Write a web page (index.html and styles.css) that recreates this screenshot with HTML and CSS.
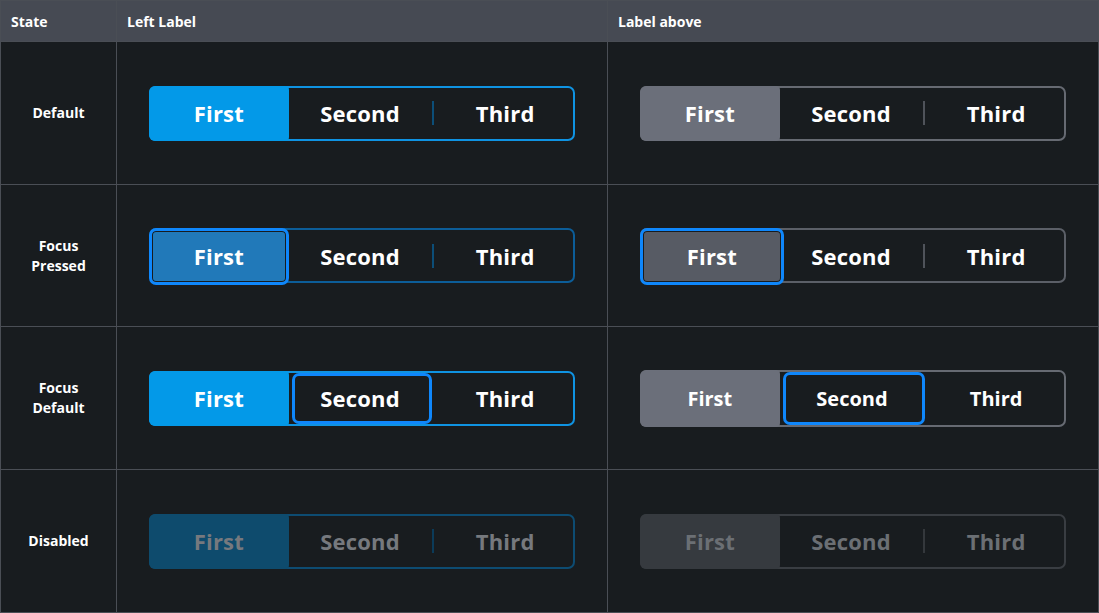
FILE: index.html
```html
<!DOCTYPE html>
<html>
<head>
<meta charset="utf-8">
<link rel="stylesheet" href="styles.css">
</head>
<body>
<div class="table">
  <div class="cell head">State</div>
  <div class="cell head">Left Label</div>
  <div class="cell head">Label above</div>

  <div class="cell state">Default</div>
  <div class="cell demo">
    <div class="seg seg--blue">
      <div class="opt opt--sel">First</div>
      <div class="opt">Second</div>
      <div class="opt opt--div">Third</div>
    </div>
  </div>
  <div class="cell demo">
    <div class="seg seg--gray">
      <div class="opt opt--sel">First</div>
      <div class="opt">Second</div>
      <div class="opt opt--div">Third</div>
    </div>
  </div>

  <div class="cell state">Focus<br>Pressed</div>
  <div class="cell demo">
    <div class="seg seg--blue seg--pressed">
      <div class="opt opt--press">First</div>
      <div class="opt">Second</div>
      <div class="opt opt--div">Third</div>
    </div>
  </div>
  <div class="cell demo">
    <div class="seg seg--gray seg--pressed">
      <div class="opt opt--press opt--wide">First</div>
      <div class="opt">Second</div>
      <div class="opt opt--div">Third</div>
    </div>
  </div>

  <div class="cell state">Focus<br>Default</div>
  <div class="cell demo">
    <div class="seg seg--blue">
      <div class="opt opt--sel">First</div>
      <div class="opt opt--focus">Second</div>
      <div class="opt">Third</div>
    </div>
  </div>
  <div class="cell demo">
    <div class="seg seg--gray seg--small">
      <div class="opt opt--sel">First</div>
      <div class="opt opt--focus opt--focus-wide">Second</div>
      <div class="opt">Third</div>
    </div>
  </div>

  <div class="cell state">Disabled</div>
  <div class="cell demo">
    <div class="seg seg--blue seg--disabled">
      <div class="opt opt--sel">First</div>
      <div class="opt">Second</div>
      <div class="opt opt--div">Third</div>
    </div>
  </div>
  <div class="cell demo">
    <div class="seg seg--gray seg--disabled">
      <div class="opt opt--sel">First</div>
      <div class="opt">Second</div>
      <div class="opt opt--div">Third</div>
    </div>
  </div>
</div>
</body>
</html>
```

FILE: styles.css
```css
html, body {
  margin: 0;
  padding: 0;
  background: #181c1f;
}

body {
  font-family: "Open Sans", "Noto Sans", sans-serif;
  color: #ffffff;
  width: 1099px;
  height: 613px;
  overflow: hidden;
}

.table {
  display: grid;
  grid-template-columns: 115px 490px 490px;
  grid-template-rows: 40px 142px 141px 142px 142px;
  gap: 1px;
  padding: 1px;
  background: #4a4e55;
  width: 1099px;
  height: 613px;
  box-sizing: border-box;
}

.cell {
  background: #181c1f;
}

.head {
  background: #464a53;
  font-size: 14px;
  font-weight: 700;
  display: flex;
  align-items: center;
  padding-left: 10px;
  padding-top: 1px;
}

.state {
  display: flex;
  align-items: center;
  justify-content: center;
  text-align: center;
  font-size: 14px;
  font-weight: 700;
  line-height: 20px;
}

.demo {
  display: flex;
  align-items: center;
  padding-left: 32px;
}

.seg {
  --bd: #0f93e2;
  --fill: #0399e8;
  --div: #0c4e78;
  display: flex;
  width: 426px;
  height: 55px;
  box-sizing: border-box;
  border: 2px solid var(--bd);
  border-radius: 7px;
  font-size: 22px;
  font-weight: 700;
  letter-spacing: 0.2px;
}

.seg--gray {
  --bd: #666a72;
  --fill: #6b6f7a;
  --div: #4f535a;
}

.seg--blue.seg--pressed {
  --bd: #0c5d98;
  --pfill: #2179b9;
}

.seg--gray.seg--pressed {
  --bd: #5b5f67;
  --pfill: #575b64;
}

.seg--small {
  font-size: 20px;
  height: 57px;
  letter-spacing: 0;
}

.seg--blue.seg--disabled {
  --bd: #0d4c72;
  --fill: #0e4b6d;
  --div: #0b3b59;
  color: #76797e;
}

.seg--gray.seg--disabled {
  --bd: #393d42;
  --fill: #363a3f;
  --div: #34383c;
  color: #6b6f74;
}

.opt {
  flex: 0 0 33.333%;
  position: relative;
  display: flex;
  align-items: center;
  justify-content: center;
  box-sizing: border-box;
}

.opt:nth-child(2) {
  padding-right: 4px;
}

.opt:nth-child(3) {
  padding-left: 5px;
}

.opt--div::before {
  content: "";
  position: absolute;
  left: 0;
  top: 50%;
  width: 2px;
  height: 24px;
  margin-top: -12px;
  background: var(--div);
}

.opt--sel {
  flex-basis: calc(33.333% - 1px);
  margin: -2px 3px -2px -2px;
  background: var(--fill);
  border-radius: 6px 4px 4px 6px;
}

.opt--press {
  flex-basis: calc(33.333% - 1px);
  margin: -2px 3px -4px -2px;
  padding-bottom: 2px;
  background: var(--pfill);
  border: 3px solid #0f87fb;
  border-radius: 7px;
  box-shadow: inset 0 0 0 1px #181c1f;
}

.opt--press.opt--wide {
  flex-basis: calc(33.333% + 3px);
  margin-right: -1px;
}

.opt--focus {
  border: 3px solid #0f87fb;
  border-radius: 7px;
  background: #181c1f;
}

.opt--focus.opt--focus-wide {
  flex-basis: calc(33.333% + 2px);
  margin-right: -2px;
}
```
